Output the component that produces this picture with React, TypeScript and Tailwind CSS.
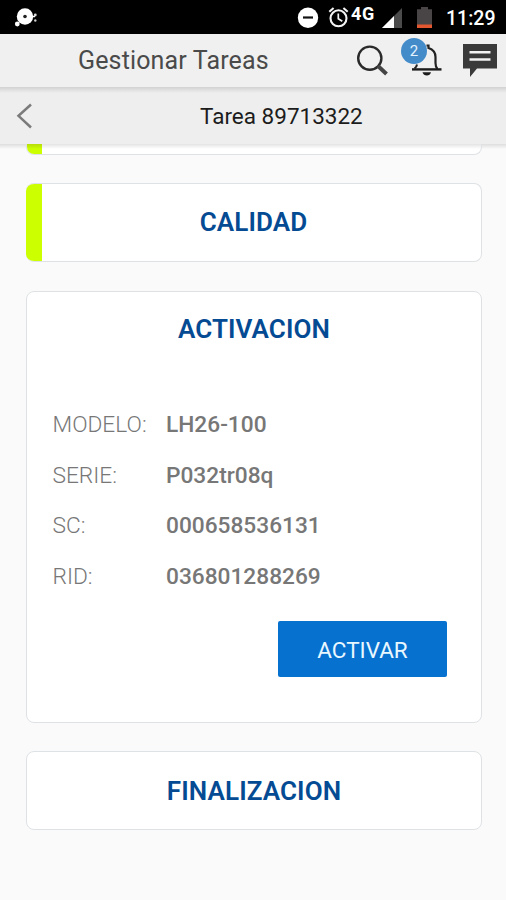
import type { ReactNode } from "react";

const details = [
  { label: "MODELO:", value: "LH26-100" },
  { label: "SERIE:", value: "P032tr08q" },
  { label: "SC:", value: "000658536131" },
  { label: "RID:", value: "036801288269" },
];

function StatusBar() {
  return (
    <div className="flex h-[34px] shrink-0 items-start bg-black text-white">
      <svg className="ml-[14px] mt-[6px]" width="24" height="22" viewBox="0 0 24 22">
        <circle cx="11" cy="10.5" r="8.2" fill="#fff" />
        <circle cx="11" cy="10.5" r="1.8" fill="#222" />
        <circle cx="3.3" cy="18" r="2.4" fill="#fff" />
        <path d="M17 10.5h4" stroke="#fff" strokeWidth="1.5" />
        <circle cx="21.3" cy="9" r="1.4" fill="#ddd" />
        <circle cx="21.3" cy="14.5" r="1.2" fill="#ccc" />
      </svg>
      <svg className="ml-auto mt-[7px] shrink-0" width="22" height="22" viewBox="0 0 22 22">
        <circle cx="11" cy="10.8" r="10.2" fill="#fff" />
        <path d="M6 10.5h10" stroke="#111" strokeWidth="2.2" />
      </svg>
      <svg className="ml-[9px] mt-[6px] shrink-0" width="22" height="22" viewBox="0 0 22 22" fill="none" stroke="#f4f4f4">
        <circle cx="10.5" cy="12.3" r="8" strokeWidth="2.1" />
        <path d="M10.3 7.5v5.2l4 2.6" strokeWidth="1.7" />
        <path d="M1.3 5.7 5.6 2M15.4 2l4.3 3.7" strokeWidth="2.1" />
      </svg>
      <span className="ml-[1px] mt-[3px] w-[29px] text-[18px] leading-[21px] font-bold tracking-[0.6px]">4G</span>
      <svg className="ml-[2px] mt-[8px] shrink-0" width="20" height="20" viewBox="0 0 20 20">
        <path d="M0 20 20 0v20Z" fill="#4b4b4b" />
        <path d="M0 20 12 8v12Z" fill="#fff" />
      </svg>
      <svg className="ml-[15px] mt-[7px] shrink-0" width="15" height="21" viewBox="0 0 15 21">
        <path d="M0 2.3h4V0h7v2.3h4V21H0Z" fill="#494445" />
        <path d="M0 17.5h15V21H0Z" fill="#e2572f" />
      </svg>
      <span className="ml-[14px] mt-[6px] w-[60px] text-[19.5px] leading-[25px] font-medium">11:29</span>
    </div>
  );
}

function Header() {
  return (
    <header className="flex h-[53px] shrink-0 items-start bg-[#f0f0f0]">
      <h1 className="ml-[78px] mt-[12px] text-[25px] leading-[30px] tracking-[0.15px] whitespace-nowrap text-[#4a4a4a]">Gestionar Tareas</h1>
      <svg className="ml-auto mt-[11px] shrink-0" width="33" height="32" viewBox="0 0 33 32" fill="none">
        <circle cx="12.8" cy="13.2" r="11.6" stroke="#2a2a2a" strokeWidth="2.4" />
        <path d="m21 21 8.5 8" stroke="#444" strokeWidth="4" />
      </svg>
      <div className="relative ml-[21px] mt-[4px] h-[40px] w-[32px] shrink-0">
        <svg width="32" height="40" viewBox="0 0 32 40" fill="none">
          <path d="M15.5 7.500h2v2.500C22 11.500 24.500 14 24.500 19v6c0 3 .5 4.500 2 6" stroke="#222" strokeWidth="2.200" />
          <path d="M3.500 30.500c1.500-1 2.200-2 2.500-4" stroke="#222" strokeWidth="2" />
          <path d="M1 31.400h29.500" stroke="#1c1c1c" strokeWidth="2.4" />
          <path d="M11.500 34.300h8.500q-1 3.200-4.200 3.200t-4.300-3.200Z" fill="#1c1c1c" />
        </svg>
        <span className="absolute -left-[10px] top-0 flex h-[26px] w-[26px] items-center justify-center rounded-full bg-[#448bc9] text-[15px] leading-none text-[#e5f3ff]">2</span>
      </div>
      <svg className="ml-[20px] mr-[9px] mt-[10px] shrink-0" width="34" height="33" viewBox="0 0 34 33">
        <path d="M0 0h34v24.500H14L7 33V24.500H0Z" fill="#3a3a3a" />
        <path d="M6.500 8.300h21M6.500 15.600h21" stroke="#f2f2f2" strokeWidth="2.500" />
      </svg>
    </header>
  );
}

function SubHeader() {
  return (
    <div className="flex h-[57px] shrink-0 items-start bg-linear-to-b from-[#d2d2d2] via-[#eeeeee] via-[6px] to-[#eeeeee]">
      <svg className="ml-[16px] mt-[16px] shrink-0" width="18" height="26" viewBox="0 0 18 26" fill="none">
        <path d="M15 1.500 2.500 12.800 15 24.500" stroke="#7b7b7b" strokeWidth="2.500" />
      </svg>
      <h2 className="ml-[166px] mt-[15px] text-[22.5px] leading-[28px] whitespace-nowrap text-[#1c1c1c]">Tarea 89713322</h2>
    </div>
  );
}

function Title({ children }: { children: ReactNode }) {
  return <h3 className="text-center text-[26px] leading-[29px] font-semibold tracking-[0.1px] text-[#054b93]">{children}</h3>;
}

export default function App() {
  return (
    <div className="flex h-[900px] w-[506px] flex-col overflow-hidden bg-[#fafafa] font-[Roboto,sans-serif]">
      <StatusBar />
      <Header />
      <SubHeader />
      <main className="flex flex-1 flex-col bg-linear-to-b from-[#dedede] via-[#fafafa] via-[5px] to-[#fafafa] pl-[26px] pr-[24px]">
        <div className="flex h-[11px] shrink-0 overflow-hidden rounded-b-[8px] border border-t-0 border-[#dfe2e4] bg-linear-to-b from-[#e4e4e4] to-white to-[5px]">
          <div className="-mb-px w-[15px] bg-linear-to-b from-[#b6dc0a] to-[#ccff00] to-[5px]" />
        </div>
        <section className="mt-[28px] flex h-[79px] shrink-0 overflow-hidden rounded-[8px] border border-l-0 border-[#dfe2e4] bg-white">
          <div className="-my-px w-[16px] bg-[#ccff00]" />
          <div className="flex-1 pr-[16px] pt-[24px]">
            <Title>CALIDAD</Title>
          </div>
        </section>
        <section className="mt-[29px] flex h-[432px] shrink-0 flex-col rounded-[8px] border border-[#dfe2e4] bg-white">
          <div className="pt-[23px]">
            <Title>ACTIVACION</Title>
          </div>
          <dl className="mt-[56px] grid grid-cols-[113px_1fr] pl-[25.5px] text-[22.7px] leading-[50.6px] text-[#777]">
            {details.map(({ label, value }) => (
              <div className="contents" key={label}>
                <dt className="font-light">{label}</dt>
                <dd className="pl-[0.5px] font-medium">{value}</dd>
              </div>
            ))}
          </dl>
          <button className="mr-[34px] mt-[19px] h-[56px] w-[169px] self-end rounded-[2px] bg-[#0671cf] pt-[2px] text-[22.5px] leading-none text-[#e9f7ff]">ACTIVAR</button>
        </section>
        <section className="mt-[28px] h-[79px] shrink-0 rounded-[8px] border border-[#dfe2e4] bg-white pt-[25px]">
          <Title>FINALIZACION</Title>
        </section>
      </main>
    </div>
  );
}
